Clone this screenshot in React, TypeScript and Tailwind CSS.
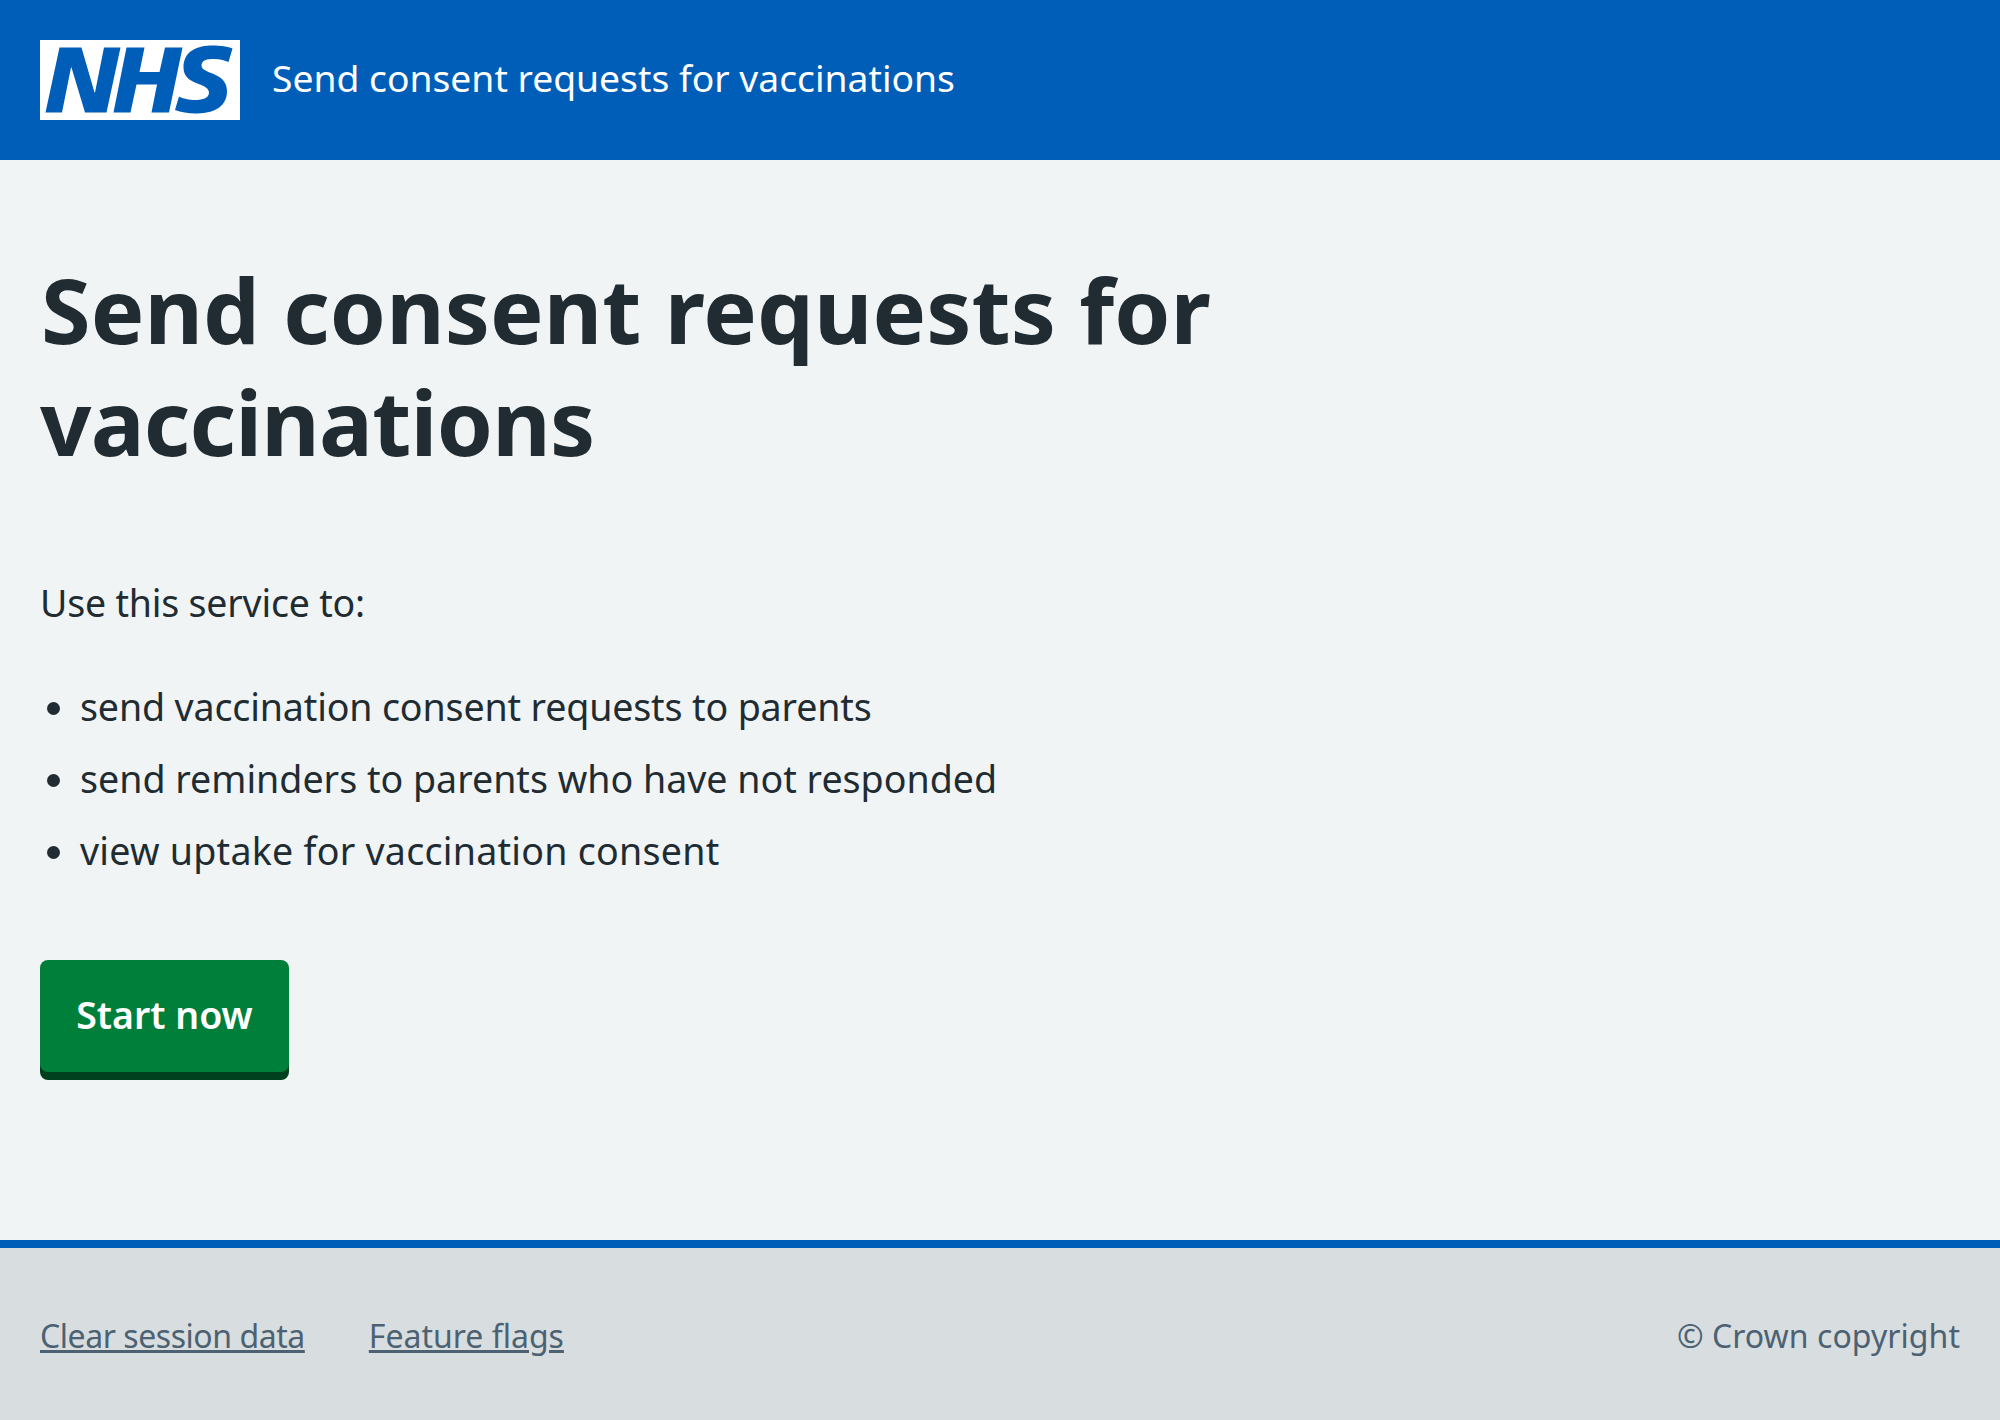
export default function App() {
  const font = { fontFamily: '"Noto Sans", sans-serif' };
  return (
    <div className="flex h-[1420px] flex-col bg-[#f0f4f5] text-[#212b32]" style={font}>
      <header className="flex h-[160px] items-center gap-8 bg-[#005eb8] px-10">
        <svg viewBox="0 0 40 16" className="h-20 w-[200px]" aria-label="NHS">
          <path fill="#fff" d="M0 0h40v16H0z" />
          <path fill="#005eb8" d="M3.9 1.5h4.4l2.6 9h.1l1.8-9h3.3l-2.8 13H9l-2.7-9h-.1l-1.8 9H1.1M17.3 1.5h3.6l-1 4.9h4L25 1.5h3.5l-2.7 13h-3.5l1.1-5.6h-4.1l-1.2 5.6h-3.4M37.7 4.4c-.7-.3-1.6-.6-2.9-.6-1.4 0-2.5.2-2.5 1.3 0 1.8 5.1 1.2 5.1 5.1 0 3.6-3.3 4.5-6.4 4.5-1.3 0-2.9-.3-4-.7l.8-2.7c.7.4 2.1.7 3.2.7s2.8-.2 2.8-1.5c0-2.1-5.1-1.3-5.1-5 0-3.4 2.9-4.4 5.8-4.4 1.6 0 3.1.2 4 .6" />
        </svg>
        <span className="mb-1 text-[37.25px] leading-[48px] text-white">Send consent requests for vaccinations</span>
      </header>
      <main className="flex flex-1 flex-col items-start px-10 pt-[93px]">
        <h1 className="mb-[98px] ml-[1px] w-[1280px] text-[90px] leading-[112px] font-bold">
          <span className="tracking-[0.05px]">Send consent requests for</span> <span className="-ml-[1px] tracking-[-0.75px]">vaccinations</span>
        </h1>
        <p className="mb-[48px] text-[37.5px] leading-[56px] tracking-[-0.2px]">Use this service to:</p>
        <ul className="mb-[81px] flex list-disc flex-col gap-4 pl-10 text-[37.6px] leading-[56px]">
          <li className="tracking-[-0.15px]">send vaccination consent requests to parents</li>
          <li>send reminders to parents who have not responded</li>
          <li className="tracking-[0.25px]">view uptake for vaccination consent</li>
        </ul>
        <button className="flex h-[112px] w-[249px] items-center justify-center rounded-lg bg-[#007f3b] pb-[2px] text-[37.5px] font-semibold text-white shadow-[0_8px_0_#00401e]">Start now</button>
      </main>
      <footer className="flex h-[180px] items-center justify-between border-t-8 border-[#005eb8] bg-[#d8dde0] px-10 pt-1 text-[32px] text-[#4c6272]">
        <div className="flex gap-16">
          <a className="tracking-[-0.45px] underline">Clear session data</a>
          <a className="underline">Feature flags</a>
        </div>
        <span className="tracking-[0.05px]">© Crown copyright</span>
      </footer>
    </div>
  );
}
